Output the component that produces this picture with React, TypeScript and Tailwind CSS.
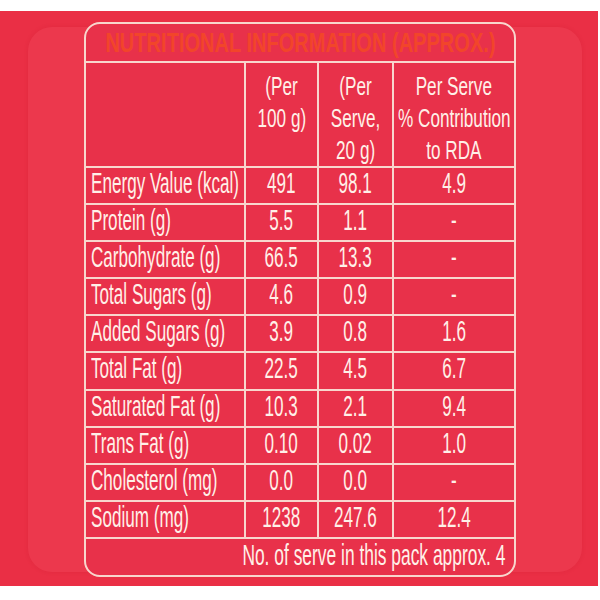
import React from "react";

const rows: [string, string, string, string][] = [
  ["Energy Value (kcal)", "491", "98.1", "4.9"],
  ["Protein (g)", "5.5", "1.1", "-"],
  ["Carbohydrate (g)", "66.5", "13.3", "-"],
  ["Total Sugars (g)", "4.6", "0.9", "-"],
  ["Added Sugars (g)", "3.9", "0.8", "1.6"],
  ["Total Fat (g)", "22.5", "4.5", "6.7"],
  ["Saturated Fat (g)", "10.3", "2.1", "9.4"],
  ["Trans Fat (g)", "0.10", "0.02", "1.0"],
  ["Cholesterol (mg)", "0.0", "0.0", "-"],
  ["Sodium (mg)", "1238", "247.6", "12.4"],
];

function BodyText({ children, align }: { children: React.ReactNode; align: "left" | "center" }) {
  return (
    <span
      className={
        align === "left"
          ? "inline-block whitespace-nowrap origin-left scale-x-[0.59]"
          : "inline-block whitespace-nowrap origin-center scale-x-[0.59]"
      }
    >
      {children}
    </span>
  );
}

function HeadLine({ children }: { children: React.ReactNode }) {
  return <span className="block whitespace-nowrap origin-center scale-x-[0.66]">{children}</span>;
}

export default function App() {
  return (
    <div className="w-[600px] h-[600px] bg-white pt-[11px] font-['Liberation_Sans',Arial,sans-serif] text-[#fff0e8]">
      <div className="relative w-[598px] h-[575px] bg-[#ea2f45]">
        <div className="absolute left-[28px] top-[16px] right-[16px] bottom-[14px] rounded-[24px] bg-[#ec384d] shadow-[0_0_4px_rgba(190,20,40,0.18)]" />
        <div className="relative ml-[84px] pt-[11px] w-[432px]">
          <div className="border-2 border-[#f8d6cd] rounded-[16px] overflow-hidden bg-[#e8314a]">
            {/* Title */}
            <div className="h-[39px] border-b-2 border-[#f8d6cd] flex justify-center">
              <span className="inline-block whitespace-nowrap origin-center scale-x-[0.716] text-[28px] leading-[37px] font-bold text-[#f2452a]">
                NUTRITIONAL INFORMATION (APPROX.)
              </span>
            </div>
            {/* Header */}
            <div className="h-[105px] border-b-2 border-[#f8d6cd] grid grid-cols-[160px_73px_75px_120px] text-[26px] leading-[32px]">
              <div className="border-r-2 border-[#f8d6cd]" />
              <div className="border-r-2 border-[#f8d6cd] flex flex-col items-center pt-[7px]">
                <HeadLine>(Per</HeadLine>
                <HeadLine>100 g)</HeadLine>
              </div>
              <div className="border-r-2 border-[#f8d6cd] flex flex-col items-center pt-[7px]">
                <HeadLine>(Per</HeadLine>
                <HeadLine>Serve,</HeadLine>
                <HeadLine>20 g)</HeadLine>
              </div>
              <div className="flex flex-col items-center pt-[7px]">
                <HeadLine>Per Serve</HeadLine>
                <HeadLine>% Contribution</HeadLine>
                <HeadLine>to RDA</HeadLine>
              </div>
            </div>
            {/* Body rows */}
            {rows.map((r) => (
              <div
                key={r[0]}
                className="h-[37.1px] border-b-2 border-[#f8d6cd] grid grid-cols-[160px_73px_75px_120px] text-[29px] leading-[31px]"
              >
                <div className="border-r-2 border-[#f8d6cd] flex justify-start pl-[5px]">
                  <BodyText align="left">{r[0]}</BodyText>
                </div>
                <div className="border-r-2 border-[#f8d6cd] flex justify-center">
                  <BodyText align="center">{r[1]}</BodyText>
                </div>
                <div className="border-r-2 border-[#f8d6cd] flex justify-center">
                  <BodyText align="center">{r[2]}</BodyText>
                </div>
                <div className="flex justify-center">
                  <BodyText align="center">{r[3]}</BodyText>
                </div>
              </div>
            ))}
            {/* Footer */}
            <div className="h-[36px] flex justify-end pr-[9px] text-[29px] leading-[31px] pt-[1px]">
              <span className="inline-block whitespace-nowrap origin-right scale-x-[0.6]">
                No. of serve in this pack approx. 4
              </span>
            </div>
          </div>
        </div>
      </div>
    </div>
  );
}
